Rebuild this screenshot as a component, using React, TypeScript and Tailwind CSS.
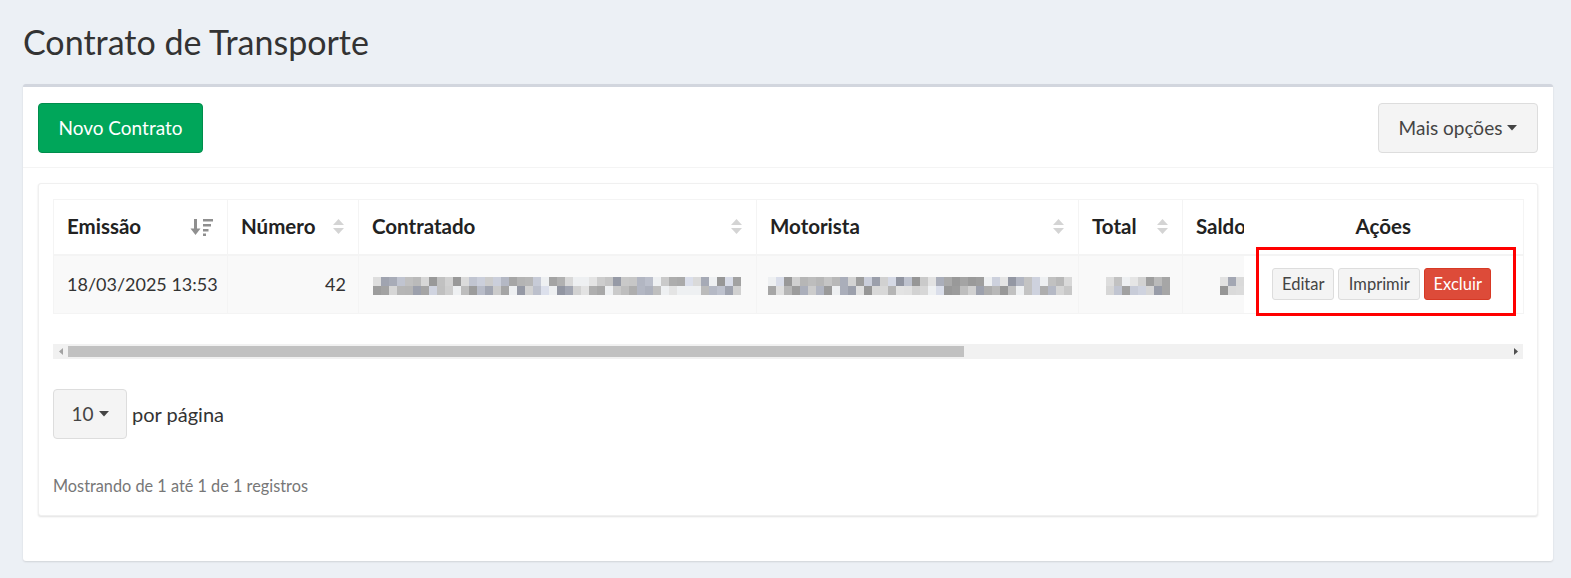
import React from "react"

const seeded = (seed: number) => {
  let s = seed
  return () => {
    s = (s * 9301 + 49297) % 233280
    return s / 233280
  }
}

const shade = (r: () => number) => {
  const v = r()
  if (v < 0.1) return "#eef0f2"
  const g = Math.round(150 + r() * 80)
  const tint = r() > 0.7 ? 8 : 0
  return `rgb(${g - tint},${g - tint / 2},${g + tint})`
}

const Mosaic = ({ width, seed }: { width: number; seed: number }) => {
  const r = seeded(seed)
  const cols = Math.round(width / 8)
  const rows = [0, 1].map(() => Array.from({ length: cols }, () => shade(r)))
  return (
    <div className="inline-flex flex-col align-middle">
      {rows.map((row, i) => (
        <div key={i} className="flex">
          {row.map((c, j) => (
            <div key={j} className="h-[9px] w-[8px] shrink-0" style={{ background: c }} />
          ))}
        </div>
      ))}
    </div>
  )
}

const SortBoth = () => (
  <svg width="13" height="19" viewBox="0 0 13 19">
    <path d="M1 8 L6.5 2 L12 8 Z" fill="#d4d4d4" />
    <path d="M1 11 L6.5 17 L12 11 Z" fill="#d4d4d4" />
  </svg>
)

const SortDesc = () => (
  <svg width="24" height="20" viewBox="0 0 24 20">
    <rect x="4" y="2" width="3" height="11" fill="#8f8f8f" />
    <path d="M0.5 11.5 L10.5 11.5 L5.5 18 Z" fill="#8f8f8f" />
    <rect x="13" y="2" width="10" height="2.5" fill="#8f8f8f" />
    <rect x="13" y="7" width="8" height="2.5" fill="#8f8f8f" />
    <rect x="13" y="12" width="5.5" height="2.5" fill="#8f8f8f" />
    <rect x="13" y="16.5" width="3" height="2.5" fill="#8f8f8f" />
  </svg>
)

const Caret = () => (
  <svg width="10" height="6" viewBox="0 0 10 6" className="ml-[5px]">
    <path d="M0 0 L10 0 L5 5.5 Z" fill="#444" />
  </svg>
)

const Th = ({ label, icon }: { label: string; icon?: React.ReactNode }) => (
  <th className="h-[55px] border-r border-b-2 border-[#f4f4f4] px-[13px] text-left text-[20.5px] font-bold text-[#222]">
    <div className="flex items-center justify-between">
      <span>{label}</span>
      {icon}
    </div>
  </th>
)

export default function App() {
  return (
    <div className="min-h-screen bg-[#ecf0f5] [font-family:Lato,sans-serif] text-[#333] pl-[23px] pr-[18px] pt-[20px]">
      <h1 className="text-[34px] leading-[44px] font-normal text-[#333]">Contrato de Transporte</h1>

      <div className="mt-[20px] rounded-[3px] border-t-[3px] border-[#d2d6de] bg-white shadow-[0_1px_2px_rgba(0,0,0,0.12)]">
        <div className="flex items-center justify-between border-b border-[#f4f4f4] px-[15px] pt-[16px] pb-[14px]">
          <button className="h-[50px] w-[165px] rounded-[4px] border border-[#008d4c] bg-[#00a65a] text-[19px] text-white">
            Novo Contrato
          </button>
          <button className="flex h-[50px] w-[160px] items-center justify-center rounded-[4px] border border-[#ddd] bg-[#f4f4f4] text-[19px] text-[#444]">
            Mais opções
            <Caret />
          </button>
        </div>

        <div className="px-[15px] pt-[15px] pb-[45px]">
          <div className="rounded-[3px] border border-[#f0f0f0] bg-white px-[14px] pt-[15px] pb-[18px] shadow-[0_1px_2px_rgba(0,0,0,0.12)]">
            <div className="relative w-[1470px]">
              <table className="w-[1470px] table-fixed border-collapse border border-[#f4f4f4] text-[18px]">
                <colgroup>
                  <col className="w-[174px]" />
                  <col className="w-[131px]" />
                  <col className="w-[398px]" />
                  <col className="w-[322px]" />
                  <col className="w-[104px]" />
                  <col className="w-[61px]" />
                  <col className="w-[280px]" />
                </colgroup>
                <thead>
                  <tr>
                    <Th label="Emissão" icon={<SortDesc />} />
                    <Th label="Número" icon={<SortBoth />} />
                    <Th label="Contratado" icon={<SortBoth />} />
                    <Th label="Motorista" icon={<SortBoth />} />
                    <Th label="Total" icon={<SortBoth />} />
                    <th className="h-[55px] overflow-hidden border-b-2 border-[#f4f4f4] pl-[13px] text-left text-[20.5px] font-bold whitespace-nowrap text-[#222]">
                      Saldo
                    </th>
                    <th className="h-[55px] border-b-2 border-[#f4f4f4] bg-white text-center text-[20.5px] font-bold text-[#222]">
                      Ações
                    </th>
                  </tr>
                </thead>
                <tbody>
                  <tr className="h-[59px] bg-[#f9f9f9] [&>td]:border-[#f4f4f4]">
                    <td className="border-r px-[13px] whitespace-nowrap">18/03/2025 13:53</td>
                    <td className="border-r px-[12px] text-right">42</td>
                    <td className="border-r pl-[14px]">
                      <Mosaic width={370} seed={11} />
                    </td>
                    <td className="border-r pl-[11px]">
                      <Mosaic width={304} seed={47} />
                    </td>
                    <td className="border-r pr-[12px] text-right">
                      <Mosaic width={64} seed={5} />
                    </td>
                    <td className="overflow-hidden pl-[37px] whitespace-nowrap">
                      <Mosaic width={48} seed={29} />
                    </td>
                    <td className="bg-white">
                      <div className="flex items-center justify-center gap-[4px] pr-[3px] text-[16.5px]">
                        <button className="h-[32px] w-[62px] rounded-[3px] border border-[#ddd] bg-[#f4f4f4] text-[#444]">Editar</button>
                        <button className="h-[32px] w-[82px] rounded-[3px] border border-[#ddd] bg-[#f4f4f4] text-[#444]">Imprimir</button>
                        <button className="h-[32px] w-[67px] rounded-[3px] border border-[#d73925] bg-[#dd4b39] text-white">Excluir</button>
                      </div>
                    </td>
                  </tr>
                </tbody>
              </table>
              <div className="absolute left-[1203px] top-[48px] h-[69px] w-[260px] border-[3px] border-[#f00]" />

              <div className="mt-[30px] flex h-[15px] w-[1470px] items-center bg-[#f1f1f1]">
                <div className="flex w-[15px] justify-center">
                  <svg width="4" height="7" viewBox="0 0 4 7">
                    <path d="M4 0 L0 3.5 L4 7 Z" fill="#a3a3a3" />
                  </svg>
                </div>
                <div className="h-[11px] w-[896px] bg-[#c1c1c1]" />
                <div className="flex-1" />
                <div className="flex w-[15px] justify-center">
                  <svg width="4" height="7" viewBox="0 0 4 7">
                    <path d="M0 0 L4 3.5 L0 7 Z" fill="#505050" />
                  </svg>
                </div>
              </div>
            </div>

            <div className="mt-[30px] flex items-center">
              <button className="flex h-[50px] w-[74px] items-center justify-center rounded-[4px] border border-[#ddd] bg-[#f4f4f4] text-[19px] text-[#444]">
                10
                <Caret />
              </button>
              <span className="ml-[5px] text-[20px]">por página</span>
            </div>

            <p className="mt-[36px] text-[16.3px] leading-[22px] text-[#777]">Mostrando de 1 até 1 de 1 registros</p>
          </div>
        </div>
      </div>
    </div>
  )
}
